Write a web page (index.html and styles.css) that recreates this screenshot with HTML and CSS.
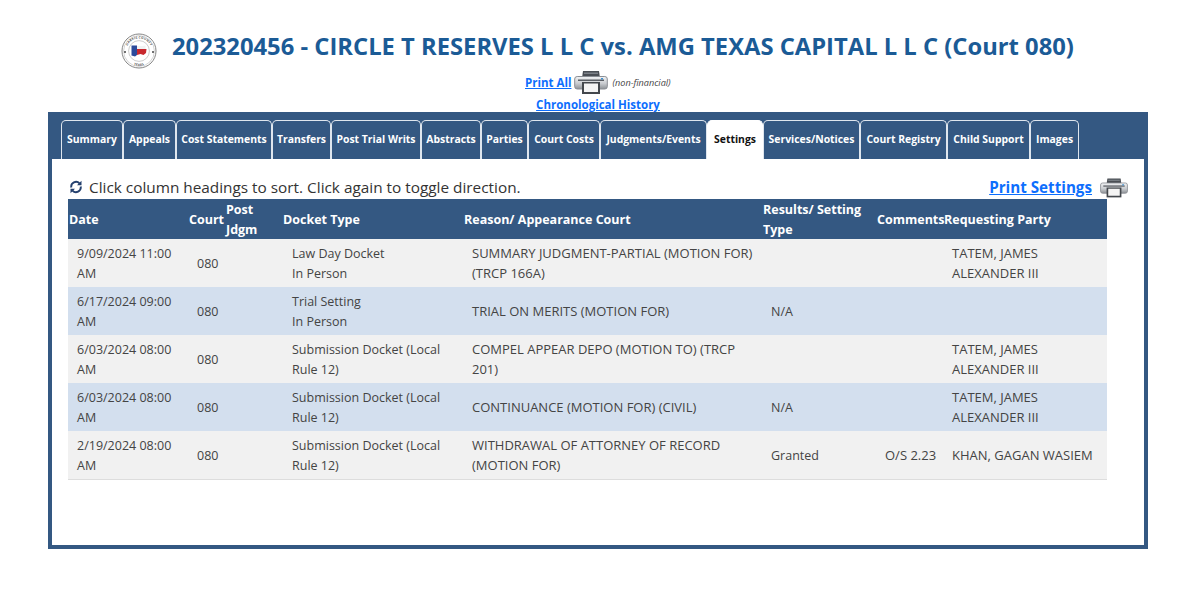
FILE: index.html
```html
<!DOCTYPE html>
<html lang="en">
<head>
<meta charset="utf-8">
<title>Case 202320456 Settings</title>
<link rel="stylesheet" href="styles.css">
</head>
<body>
<svg class="defs" width="0" height="0" aria-hidden="true">
  <defs>
    <linearGradient id="pb" x1="0" y1="0" x2="0" y2="1"><stop offset="0" stop-color="#f2f3f4"/><stop offset="0.55" stop-color="#c9ccd0"/><stop offset="1" stop-color="#8d9196"/></linearGradient>
    <symbol id="printer" viewBox="0 0 34 24">
      <path d="M9 1h16l1 7H8z" fill="#4a4e54"/>
      <path d="M10 2.500h14v1.500H10z" fill="#7b8087"/>
      <rect x="0.700" y="6.500" width="32.600" height="12.500" rx="2.500" fill="url(#pb)" stroke="#8a8e94" stroke-width="1"/>
      <rect x="4" y="9.500" width="26" height="1.500" fill="#5a5e64"/>
      <rect x="27" y="8" width="2" height="1.500" fill="#3d8fd0"/>
      <rect x="8" y="12" width="18" height="12" fill="#43474c"/>
      <rect x="10" y="13.500" width="14" height="8.500" fill="#f4f4f4"/>
    </symbol>
  </defs>
</svg>
<header class="head">
  <div class="title-row">
    <svg class="seal" viewBox="0 0 36 36" role="img" aria-label="Harris County seal">
      <circle cx="18" cy="18" r="17" fill="#fff" stroke="#777" stroke-width="0.900"/>
      <circle cx="18" cy="18" r="15.400" fill="none" stroke="#aaa" stroke-width="0.500"/>
      <circle cx="18" cy="18" r="10.400" fill="none" stroke="#999" stroke-width="0.500"/>
      <path id="sealtop" d="M5.500 18a12.500 12.500 0 0 1 25 0" fill="none"/>
      <path id="sealbot" d="M5 20a13 13 0 0 0 26 0" fill="none"/>
      <text class="seal-text"><textPath href="#sealtop" startOffset="50%" text-anchor="middle">HARRIS COUNTY</textPath></text>
      <text class="seal-text"><textPath href="#sealbot" startOffset="50%" text-anchor="middle">TEXAS</textPath></text>
      <circle cx="4" cy="19" r="1" fill="#444"/>
      <circle cx="32" cy="19" r="1" fill="#444"/>
      <path d="M10.500 12.500l5.500 0 0 9.500-2 1.500-3.500-1z" fill="#2b4a9b"/>
      <path d="M16 13h5.500l3-0.500 0 3.500-8.500 0z" fill="#f2f2f2"/>
      <path d="M16 16l9.500 0-0.500 4-2.500 2-3-1-3.500 1z" fill="#c8282e"/>
    </svg>
    <h1 class="title">202320456 - CIRCLE T RESERVES L L C vs. AMG TEXAS CAPITAL L L C (Court 080)</h1>
  </div>
  <div class="print-row">
    <a class="link" href="#">Print All</a>
    <svg class="printer"><use href="#printer"/></svg>
    <span class="note">(non-financial)</span>
  </div>
  <div class="chrono-row"><a class="link" href="#">Chronological History</a></div>
</header>

<main class="panel">
  <nav class="tabs">
    <a class="tab">Summary</a>
    <a class="tab">Appeals</a>
    <a class="tab">Cost Statements</a>
    <a class="tab">Transfers</a>
    <a class="tab">Post Trial Writs</a>
    <a class="tab">Abstracts</a>
    <a class="tab">Parties</a>
    <a class="tab">Court Costs</a>
    <a class="tab">Judgments/Events</a>
    <a class="tab active">Settings</a>
    <a class="tab">Services/Notices</a>
    <a class="tab">Court Registry</a>
    <a class="tab">Child Support</a>
    <a class="tab">Images</a>
  </nav>
  <section class="content">
    <div class="tools">
      <div class="sort-hint">
        <svg class="refresh" viewBox="0 0 14 14" aria-hidden="true">
          <path d="M2.300 7.500A4.800 4.800 0 0 1 10.500 3.400" fill="none" stroke="#24406e" stroke-width="1.900"/>
          <path d="M11.700 6.500A4.800 4.800 0 0 1 3.500 10.600" fill="none" stroke="#24406e" stroke-width="1.900"/>
          <path d="M12.500 .8v4.500H8z" fill="#24406e"/>
          <path d="M1.500 13.200V8.700H6z" fill="#24406e"/>
        </svg>
        <span>Click column headings to sort. Click again to toggle direction.</span>
      </div>
      <div class="print-settings">
        <a class="link" href="#">Print Settings</a>
        <svg class="printer small"><use href="#printer"/></svg>
      </div>
    </div>
    <table class="grid">
      <colgroup>
        <col class="c-date"><col class="c-court"><col class="c-post"><col class="c-type"><col class="c-reason"><col class="c-result"><col class="c-comment"><col class="c-party">
      </colgroup>
      <thead>
        <tr>
          <th>Date</th><th>Court</th><th>Post Jdgm</th><th>Docket Type</th><th>Reason/ Appearance Court</th><th>Results/ Setting Type</th><th>Comments</th><th>Requesting Party</th>
        </tr>
      </thead>
      <tbody>
        <tr>
          <td>9/09/2024 11:00 AM</td><td>080</td><td></td><td>Law Day Docket<br>In Person</td><td>SUMMARY JUDGMENT-PARTIAL (MOTION FOR) (TRCP 166A)</td><td></td><td></td><td>TATEM, JAMES ALEXANDER III</td>
        </tr>
        <tr>
          <td>6/17/2024 09:00 AM</td><td>080</td><td></td><td>Trial Setting<br>In Person</td><td>TRIAL ON MERITS (MOTION FOR)</td><td>N/A</td><td></td><td></td>
        </tr>
        <tr>
          <td>6/03/2024 08:00 AM</td><td>080</td><td></td><td>Submission Docket (Local Rule 12)</td><td>COMPEL APPEAR DEPO (MOTION TO) (TRCP 201)</td><td></td><td></td><td>TATEM, JAMES ALEXANDER III</td>
        </tr>
        <tr>
          <td>6/03/2024 08:00 AM</td><td>080</td><td></td><td>Submission Docket (Local Rule 12)</td><td>CONTINUANCE (MOTION FOR) (CIVIL)</td><td>N/A</td><td></td><td>TATEM, JAMES ALEXANDER III</td>
        </tr>
        <tr>
          <td>2/19/2024 08:00 AM</td><td>080</td><td></td><td>Submission Docket (Local Rule 12)</td><td>WITHDRAWAL OF ATTORNEY OF RECORD (MOTION FOR)</td><td>Granted</td><td>O/S 2.23</td><td>KHAN, GAGAN WASIEM</td>
        </tr>
      </tbody>
    </table>
  </section>
</main>
</body>
</html>
```
FILE: styles.css
```css
* { box-sizing: border-box; }
html, body { margin: 0; padding: 0; background: #fff; }
body {
  width: 1188px;
  height: 589px;
  overflow: hidden;
  font-family: "Open Sans", "Noto Sans", sans-serif;
  color: #333;
  padding: 0 40px 0 48px;
}
.defs { position: absolute; }
.head { height: 112px; padding-top: 28px; }
.title-row { display: flex; align-items: flex-start; height: 36px; padding-left: 73px; }
.seal { width: 36px; height: 36px; flex: none; margin-top: 5px; }
.seal-text { font: 700 3.200px "Open Sans", sans-serif; fill: #555; letter-spacing: .2px; }
.title {
  margin: 0 0 0 15px;
  font-size: 23.770px;
  font-weight: 700;
  line-height: 36px;
  color: #1b5b96;
  white-space: nowrap;
}
.link { color: #0d6efd; font-weight: 700; text-decoration: underline; }
.print-row {
  display: flex;
  align-items: center;
  height: 26px;
  margin-top: 5px;
  padding-left: 477px;
  font-size: 11.500px;
}
.printer { width: 34px; height: 24px; margin: 0 4px 0 3px; flex: none; }
.note { font-size: 9.100px; font-style: italic; color: #444; }
.chrono-row { height: 17px; line-height: 17px; text-align: center; font-size: 11.500px; padding-top: 1px; }
.panel {
  width: 1100px;
  height: 437px;
  background: #345882;
  padding: 8px 4px 4px;
  display: flex;
  flex-direction: column;
}
.tabs {
  display: grid;
  grid-template-columns: 62px 53px 96px 59px 90px 60px 47px 72px 107px 56px 97px 87px 83px 49px;
  height: 39px;
  margin-left: 9px;
  justify-content: start;
}
.tab {
  display: flex;
  align-items: center;
  justify-content: center;
  font-size: 10.400px;
  font-weight: 700;
  color: #fff;
  white-space: nowrap;
  border: 1px solid #dfe6ee;
  border-bottom: 0;
  border-radius: 5px 5px 0 0;
  padding-bottom: 2px;
}
.tab.active { background: #fff; color: #111; border-color: #fff; }
.content { flex: 1; background: #fff; padding: 16px 16px 0; }
.tools {
  display: flex;
  justify-content: space-between;
  align-items: center;
  height: 24px;
}
.sort-hint { display: flex; align-items: center; gap: 6px; font-size: 15.350px; color: #333; }
.refresh { width: 14px; height: 14px; flex: none; margin-left: 1px; }
.print-settings { display: flex; align-items: center; gap: 8px; font-size: 15.200px; }
.printer.small { width: 28px; height: 21px; margin: 0; }
.grid {
  width: 1039px;
  border-collapse: collapse;
  table-layout: fixed;
  font-size: 12.500px;
  line-height: 20px;
}
.c-date { width: 121px; }
.c-court { width: 37px; }
.c-post { width: 57px; }
.c-type { width: 181px; }
.c-reason { width: 299px; }
.c-result { width: 114px; }
.c-comment { width: 67px; }
.c-party { width: 163px; }
.grid th {
  background: #345882;
  color: #fff;
  font-size: 12.500px;
  font-weight: 700;
  line-height: 19.500px;
  text-align: left;
  padding: 1px 0 0;
  height: 40px;
}
.grid th:first-child { padding-left: 1px; }
.grid td { padding: 5px 8px 3px; height: 48px; vertical-align: middle; color: #444; }
.grid td:nth-child(1), .grid td:nth-child(4) { padding-left: 9px; }
.grid td:nth-child(5), .grid td:nth-child(7), .grid td:nth-child(8) { font-size: 13px; padding-top: 4px; padding-bottom: 4px; }
.grid td:nth-child(7) { padding-right: 0; }
.grid tbody tr:nth-child(odd) td { background: #f1f1f1; }
.grid tbody tr:nth-child(even) td { background: #d3dfee; }
.grid tbody tr:last-child td { border-bottom: 1px solid #ddd; }
```
